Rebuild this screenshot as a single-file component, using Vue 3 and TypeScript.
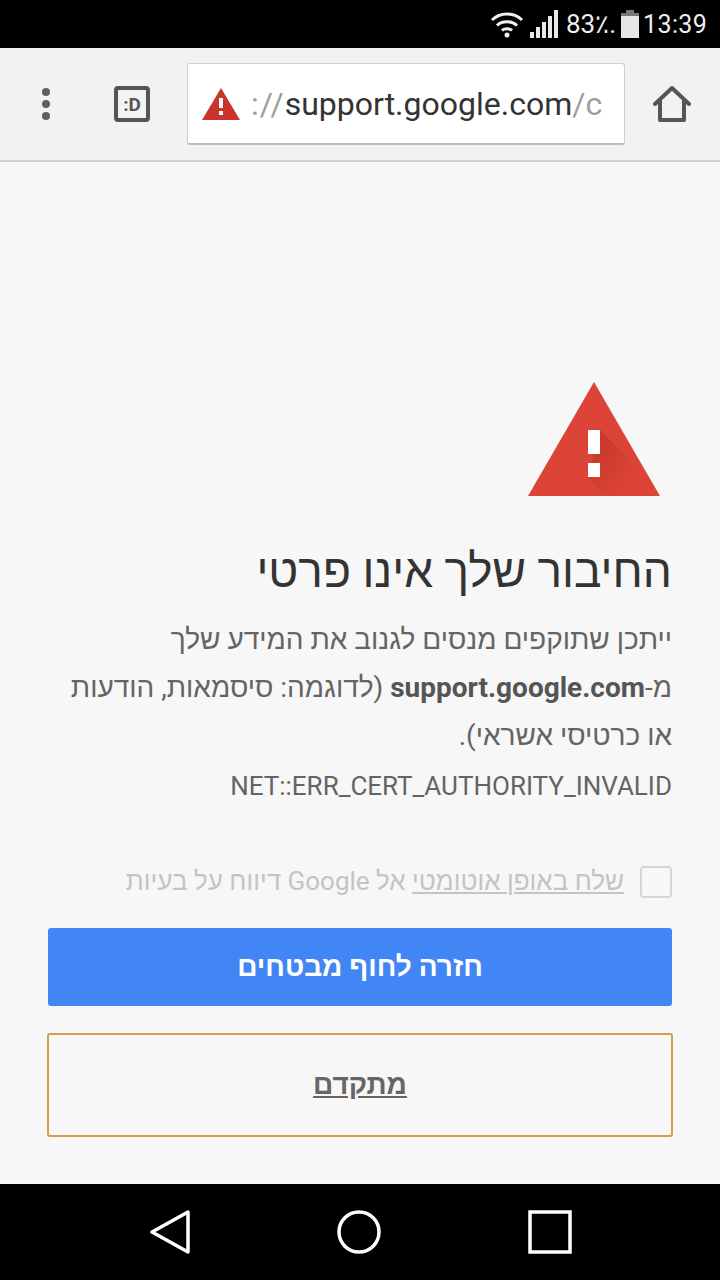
<template>
  <div class="screen">
    <div class="status">
      <svg class="wifi" width="34" height="30" viewBox="0 0 34 30">
        <path d="M2 11C10 3 24 3 32 11M7 16.500C12 11.500 22 11.500 27 16.500M12 21.500C14.500 19 19.500 19 22 21.500" fill="none" stroke="#f2f2f2" stroke-width="3" />
        <circle cx="17" cy="26" r="2.500" fill="#f2f2f2" />
      </svg>
      <svg class="signal" width="28" height="28" viewBox="0 0 28 28">
        <path d="M0 22h4v6H0zM6 17h4v11H6zM12 12h4v16h-4zM18 6h4v22h-4zM24 0h4v28h-4z" fill="#e8e8e8" />
      </svg>
      <span class="percent">83٪.</span>
      <svg class="battery" width="18" height="28" viewBox="0 0 18 28">
        <path d="M5 0h8v3H5z" fill="#777" />
        <path d="M0 3h18v3H0z" fill="#777" />
        <path d="M0 6h18v22H0z" fill="#e6e6e6" />
      </svg>
      <span class="clock">13:39</span>
    </div>

    <div class="toolbar">
      <div class="dots"><i></i><i></i><i></i></div>
      <div class="tabs">:D</div>
      <div class="omnibox">
        <svg width="38" height="32" viewBox="0 0 38 32">
          <path d="M19 0L38 32H0Z" fill="#c9352a" />
          <path d="M17 10h4v10h-4zM17 23h4v4h-4z" fill="#fff" />
        </svg>
        <span class="url"><span class="scheme">://</span>support.google.com<span class="dim">/c</span></span>
      </div>
      <svg class="home" width="38" height="38" viewBox="0 0 38 38">
        <path d="M2 19L19 3L36 19M7 16V35H31V16" fill="none" stroke="#555" stroke-width="4" stroke-linejoin="round" stroke-linecap="round" />
      </svg>
    </div>

    <main class="content" dir="rtl">
      <svg class="warning" width="132" height="114" viewBox="0 0 132 114">
        <defs>
          <linearGradient id="shade" x1="0.15" y1="0.15" x2="0.75" y2="0.75">
            <stop offset="0" stop-color="#a52714" stop-opacity="0.4" />
            <stop offset="1" stop-color="#a52714" stop-opacity="0" />
          </linearGradient>
        </defs>
        <path d="M66 0L132 114H0Z" fill="#db4437" />
        <path d="M72 48L104 80L116 114H78L60 95Z" fill="url(#shade)" />
        <path d="M60 48h12v24H60zM60 81h12v14H60z" fill="#fff" />
      </svg>
      <h1>החיבור שלך אינו פרטי</h1>
      <p class="body">
        ייתכן שתוקפים מנסים לגנוב את המידע שלך<br />
        מ-<b>support.google.com</b> (לדוגמה: סיסמאות, הודעות<br />
        או כרטיסי אשראי).
      </p>
      <p class="code" dir="ltr">NET::ERR_CERT_AUTHORITY_INVALID</p>
      <label class="report">
        <span class="box"></span>
        <span class="report-text"><u>שלח באופן אוטומטי</u> אל Google דיווח על בעיות</span>
      </label>
      <button class="primary">חזרה לחוף מבטחים</button>
      <button class="secondary">מתקדם</button>
    </main>

    <div class="nav">
      <svg width="40" height="44" viewBox="0 0 40 44">
        <path d="M2 22L38 2V42Z" fill="none" stroke="#fff" stroke-width="3.500" stroke-linejoin="round" />
      </svg>
      <svg width="44" height="44" viewBox="0 0 44 44">
        <circle cx="22" cy="22" r="20" fill="none" stroke="#fff" stroke-width="3.500" />
      </svg>
      <svg width="44" height="44" viewBox="0 0 44 44">
        <rect x="2" y="2" width="40" height="40" fill="none" stroke="#fff" stroke-width="3.500" />
      </svg>
    </div>
  </div>
</template>

<script setup lang="ts">
</script>

<style>
html, body {
  margin: 0;
  background: #f7f7f7;
}
</style>

<style scoped>
.screen {
  width: 720px;
  height: 1280px;
  display: flex;
  flex-direction: column;
  overflow: hidden;
  background: #f7f7f7;
  font-family: Roboto, "Liberation Sans", sans-serif;
}

.status {
  height: 48px;
  background: #000;
  color: #eee;
  display: flex;
  align-items: center;
  justify-content: flex-end;
  padding-right: 14px;
  box-sizing: border-box;
}

.wifi {
  margin-right: 6px;
}

.signal {
  margin-right: 8px;
}

.percent {
  font-size: 26px;
  width: 55px;
  white-space: nowrap;
}

.battery {
  margin-right: 4px;
}

.clock {
  font-size: 25px;
  width: 63px;
  letter-spacing: 0.4px;
  white-space: nowrap;
}

.toolbar {
  height: 114px;
  box-sizing: border-box;
  background: #f2f2f2;
  border-bottom: 2px solid #cfcfcf;
  display: flex;
  align-items: center;
  padding-left: 42px;
}

.dots {
  width: 10px;
  display: flex;
  flex-direction: column;
  gap: 4px;
}

.dots i {
  display: block;
  width: 8px;
  height: 8px;
  border-radius: 50%;
  background: #5f5f5f;
}

.tabs {
  margin-left: 62px;
  width: 36px;
  height: 36px;
  box-sizing: border-box;
  border: 4px solid #555;
  border-radius: 4px;
  color: #555;
  font-size: 19px;
  font-weight: 700;
  display: flex;
  align-items: center;
  justify-content: center;
}

.omnibox {
  margin-left: 37px;
  width: 438px;
  height: 82px;
  box-sizing: border-box;
  background: #fff;
  border: 1px solid #d0d0d0;
  border-bottom: 2px solid #bdbdbd;
  border-radius: 3px;
  display: flex;
  align-items: center;
  padding-left: 14px;
}

.url {
  margin-left: 11px;
  margin-top: 1px;
  font-size: 32px;
  color: #333;
  white-space: nowrap;
}

.scheme {
  color: #9e9e9e;
  letter-spacing: 1px;
}

.dim {
  color: #9e9e9e;
}

.home {
  margin-left: 28px;
}

.content {
  flex: 1;
  display: flex;
  flex-direction: column;
  padding: 220px 48px 0;
  align-items: flex-start;
  background: #f7f7f7;
}

.warning {
  margin-right: 12px;
}

h1 {
  margin: 45px 0 0;
  font-size: 46px;
  line-height: 60px;
  font-weight: 400;
  color: #333;
  white-space: nowrap;
}

.body {
  margin: 15px 0 0;
  font-size: 28px;
  line-height: 48px;
  color: #646464;
  white-space: nowrap;
}

.body b {
  color: #555;
  font-weight: 700;
}

.code {
  margin: 2px 0 0;
  font-size: 26px;
  line-height: 48px;
  color: #646464;
}

.report {
  margin-top: 56px;
  display: flex;
  align-items: center;
  gap: 16px;
  color: #c4c4c4;
  font-size: 26px;
}

.report-text {
  margin-top: -2px;
}

.box {
  width: 32px;
  height: 32px;
  box-sizing: border-box;
  border: 2px solid #d6d6d6;
  border-radius: 4px;
  flex: none;
}

.primary,
.secondary {
  font-family: inherit;
  width: 100%;
  font-size: 28px;
  font-weight: 700;
  border-radius: 3px;
  padding: 0 0 2px;
}

.primary {
  margin-top: 30px;
  height: 78px;
  background: #4285f4;
  color: #fff;
  border: none;
}

.secondary {
  margin: 27px -1px 0;
  width: calc(100% + 2px);
  height: 104px;
  background: transparent;
  color: #666;
  border: 2px solid #e09a50;
  text-decoration: underline;
}

.nav {
  height: 96px;
  background: #000;
  display: flex;
  align-items: center;
  justify-content: center;
  gap: 147px;
  padding-left: 2px;
  flex: none;
}
</style>
